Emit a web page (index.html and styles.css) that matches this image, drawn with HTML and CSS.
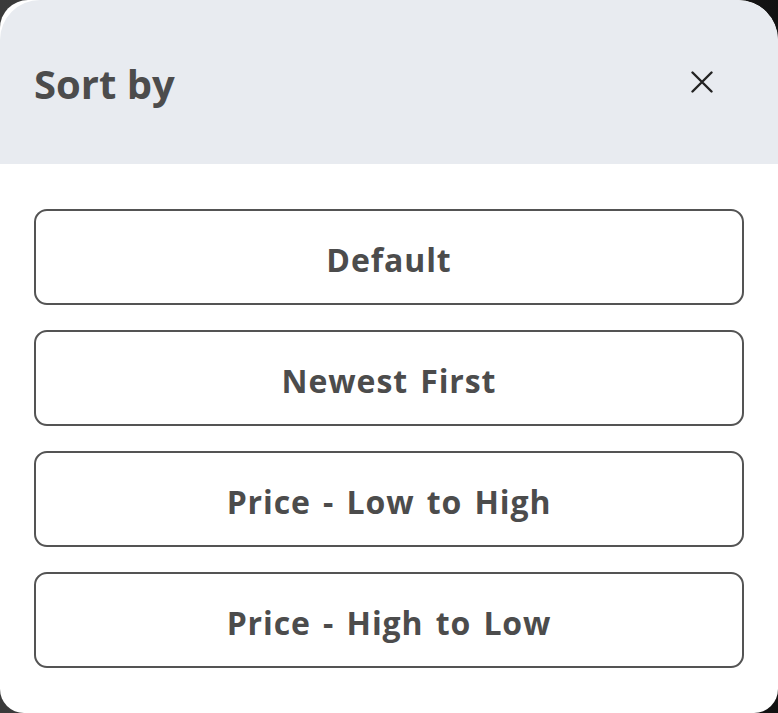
FILE: index.html
```
<!DOCTYPE html>
<html>
<head>
<meta charset="utf-8">
<link rel="stylesheet" href="styles.css">
</head>
<body>
<div class="modal">
  <div class="header">
    <h2 class="title">Sort by</h2>
    <button class="close" aria-label="Close">
      <svg width="22" height="22" viewBox="0 0 22 22"><path d="M1.5 1.5 L20.5 20.5 M20.5 1.5 L1.5 20.5" stroke="#222" stroke-width="2.4" stroke-linecap="round" fill="none"/></svg>
    </button>
  </div>
  <div class="options">
    <button class="option">Default</button>
    <button class="option">Newest First</button>
    <button class="option">Price - Low to High</button>
    <button class="option">Price - High to Low</button>
  </div>
</div>
</body>
</html>
```
FILE: styles.css
```
html, body {
  margin: 0;
  padding: 0;
  height: 100%;
}
body {
  background: linear-gradient(90deg, #3a3a3a 0%, #444 50%, #111 100%);
  font-family: "Open Sans", "Lato", sans-serif;
  overflow: hidden;
}
.modal {
  width: 778px;
  height: 713px;
  background: #fff;
  border-radius: 28px 40px 24px 24px;
  overflow: hidden;
  display: flex;
  flex-direction: column;
}
.header {
  height: 165px;
  background: #e8ebf0;
  border-radius: 40px 40px 0 0;
  display: flex;
  align-items: center;
  justify-content: space-between;
  padding: 0 65px 0 34px;
  box-sizing: border-box;
}
.title {
  margin: 0;
  font-size: 40px;
  font-weight: 700;
  color: #4c4c4c;
  padding-top: 2px;
}
.close {
  background: none;
  border: none;
  padding: 0;
  width: 22px;
  height: 22px;
  display: flex;
  cursor: pointer;
}
.options {
  padding: 45px 34px;
  display: flex;
  flex-direction: column;
  gap: 25px;
}
.option {
  height: 96px;
  border: 2px solid #545454;
  border-radius: 13px;
  background: #fff;
  font-family: "Open Sans", "Lato", sans-serif;
  font-size: 32px;
  font-weight: 700;
  letter-spacing: 0.9px;
  word-spacing: 3px;
  color: #4c4c4c;
  padding: 4px 0 0;
}
```
